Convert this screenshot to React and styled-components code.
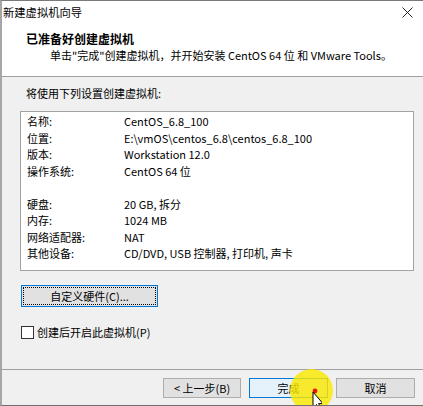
import React from 'react';
import styled, { createGlobalStyle } from 'styled-components';

const GlobalStyle = createGlobalStyle`
  html, body {
    margin: 0;
    padding: 0;
    background: #ffffff;
  }
  body {
    font-family: "Noto Sans CJK SC", "Noto Sans", sans-serif;
    font-size: 11px;
    color: #000;
  }
`;

const settingsTop = [
  ['名称:', 'CentOS_6.8_100'],
  ['位置:', 'E:\\vmOS\\centos_6.8\\centos_6.8_100'],
  ['版本:', 'Workstation 12.0'],
  ['操作系统:', 'CentOS 64 位'],
];

const settingsBottom = [
  ['硬盘:', '20 GB, 拆分'],
  ['内存:', '1024 MB'],
  ['网络适配器:', 'NAT'],
  ['其他设备:', 'CD/DVD, USB 控制器, 打印机, 声卡'],
];

const Window = styled.div`
  position: relative;
  box-sizing: border-box;
  width: 423px;
  height: 406px;
  display: flex;
  flex-direction: column;
  border-top: 1px solid #7a7a7a;
  border-left: 2px solid #a6a6a6;
  border-bottom: 1px solid #6f6f6f;
  background: #f0f0f0;
  overflow: hidden;
`;

const TitleBar = styled.div`
  height: 25px;
  display: flex;
  align-items: center;
  justify-content: space-between;
  padding: 0 10px 0 1px;
  background: #fff;
`;

const Title = styled.span`
  font-size: 11.3px;
  line-height: 25px;
  margin-top: -2px;
`;

const Close = styled.svg`
  width: 11px;
  height: 11px;
  margin-top: -2px;
`;

const Header = styled.div`
  height: 51px;
  box-sizing: border-box;
  padding: 5px 0 0 24px;
  background: #fff;
  border-bottom: 1px solid #a0a0a0;
`;

const Heading = styled.div`
  font-size: 12px;
  font-weight: bold;
  line-height: 16px;
`;

const SubText = styled.div`
  line-height: 16px;
  padding-left: 24px;
`;

const Body = styled.div`
  flex: 1;
  display: flex;
  flex-direction: column;
  align-items: flex-start;
  padding: 8px 8px 0 18px;
`;

const Intro = styled.div`
  line-height: 16px;
  padding-left: 6px;
`;

const SettingsBox = styled.div`
  box-sizing: border-box;
  width: 394px;
  height: 160px;
  margin-top: 10px;
  padding: 1px 0 0 6px;
  background: #fff;
  border: 1px solid #a3a3a3;
  display: flex;
  flex-direction: column;
  gap: 16.5px;
`;

const Group = styled.div`
  display: grid;
  grid-template-columns: 97px 1fr;
  grid-auto-rows: 16.5px;
  align-items: center;
`;

const Button = styled.button`
  position: relative;
  box-sizing: border-box;
  width: ${(p) => p.$w || 79}px;
  height: ${(p) => p.$h || 20}px;
  padding: 0;
  font: inherit;
  line-height: 1;
  color: #000;
  background: ${(p) => (p.$primary ? '#e5f1fb' : '#e1e1e1')};
  border: 1px solid ${(p) => (p.$primary || p.$focused ? '#0078d7' : '#adadad')};
  outline: ${(p) => (p.$focused ? '1px dotted #000' : 'none')};
  outline-offset: -3px;
`;

const CustomButton = styled(Button)`
  margin-top: 14px;
  margin-left: 1px;
`;

const CheckRow = styled.label`
  display: flex;
  align-items: center;
  gap: 3px;
  margin-top: 18px;
  margin-left: 1px;
  line-height: 14px;
`;

const CheckBox = styled.span`
  box-sizing: border-box;
  width: 13px;
  height: 13px;
  background: #fff;
  border: 1px solid #333;
`;

const Footer = styled.div`
  height: 36px;
  box-sizing: border-box;
  border-top: 1px solid #a0a0a0;
  padding: 8px 8px 0 0;
  display: flex;
  justify-content: flex-end;
  gap: 8px;
`;

const Highlight = styled.div`
  position: absolute;
  left: 288px;
  top: 368px;
  width: 43px;
  height: 43px;
  border-radius: 50%;
  background: rgba(250, 232, 0, 0.82);
  pointer-events: none;
`;

const Cursor = styled.svg`
  position: absolute;
  left: 304px;
  top: 386px;
  width: 16px;
  height: 22px;
`;

export default function App() {
  return (
    <>
      <GlobalStyle />
      <Window>
        <TitleBar>
          <Title>新建虚拟机向导</Title>
          <Close viewBox="0 0 11 11">
            <path d="M0.5 0.5 L10.5 10.5 M10.5 0.5 L0.5 10.5" stroke="#222" strokeWidth="1" />
          </Close>
        </TitleBar>
        <Header>
          <Heading>已准备好创建虚拟机</Heading>
          <SubText>单击"完成"创建虚拟机，并开始安装 CentOS 64 位 和 VMware Tools。</SubText>
        </Header>
        <Body>
          <Intro>将使用下列设置创建虚拟机:</Intro>
          <SettingsBox>
            <Group>
              {settingsTop.map(([k, v]) => (
                <React.Fragment key={k}>
                  <span>{k}</span>
                  <span>{v}</span>
                </React.Fragment>
              ))}
            </Group>
            <Group>
              {settingsBottom.map(([k, v]) => (
                <React.Fragment key={k}>
                  <span>{k}</span>
                  <span>{v}</span>
                </React.Fragment>
              ))}
            </Group>
          </SettingsBox>
          <CustomButton $w={137} $h={22} $focused>自定义硬件(C)...</CustomButton>
          <CheckRow>
            <CheckBox />
            创建后开启此虚拟机(P)
          </CheckRow>
        </Body>
        <Footer>
          <Button $w={78}>&lt; 上一步(B)</Button>
          <Button $primary>完成</Button>
          <Button>取消</Button>
        </Footer>
        <Highlight />
        <Cursor viewBox="0 0 16 22">
          <circle cx="9" cy="4" r="2.4" fill="#e8120c" />
          <path d="M7 5 L7 21 L10.5 17.5 L13 22 L15 21 L12.6 16.6 L17 16.6 Z" fill="#fff" stroke="#000" strokeWidth="1" strokeLinejoin="round" />
        </Cursor>
      </Window>
    </>
  );
}
